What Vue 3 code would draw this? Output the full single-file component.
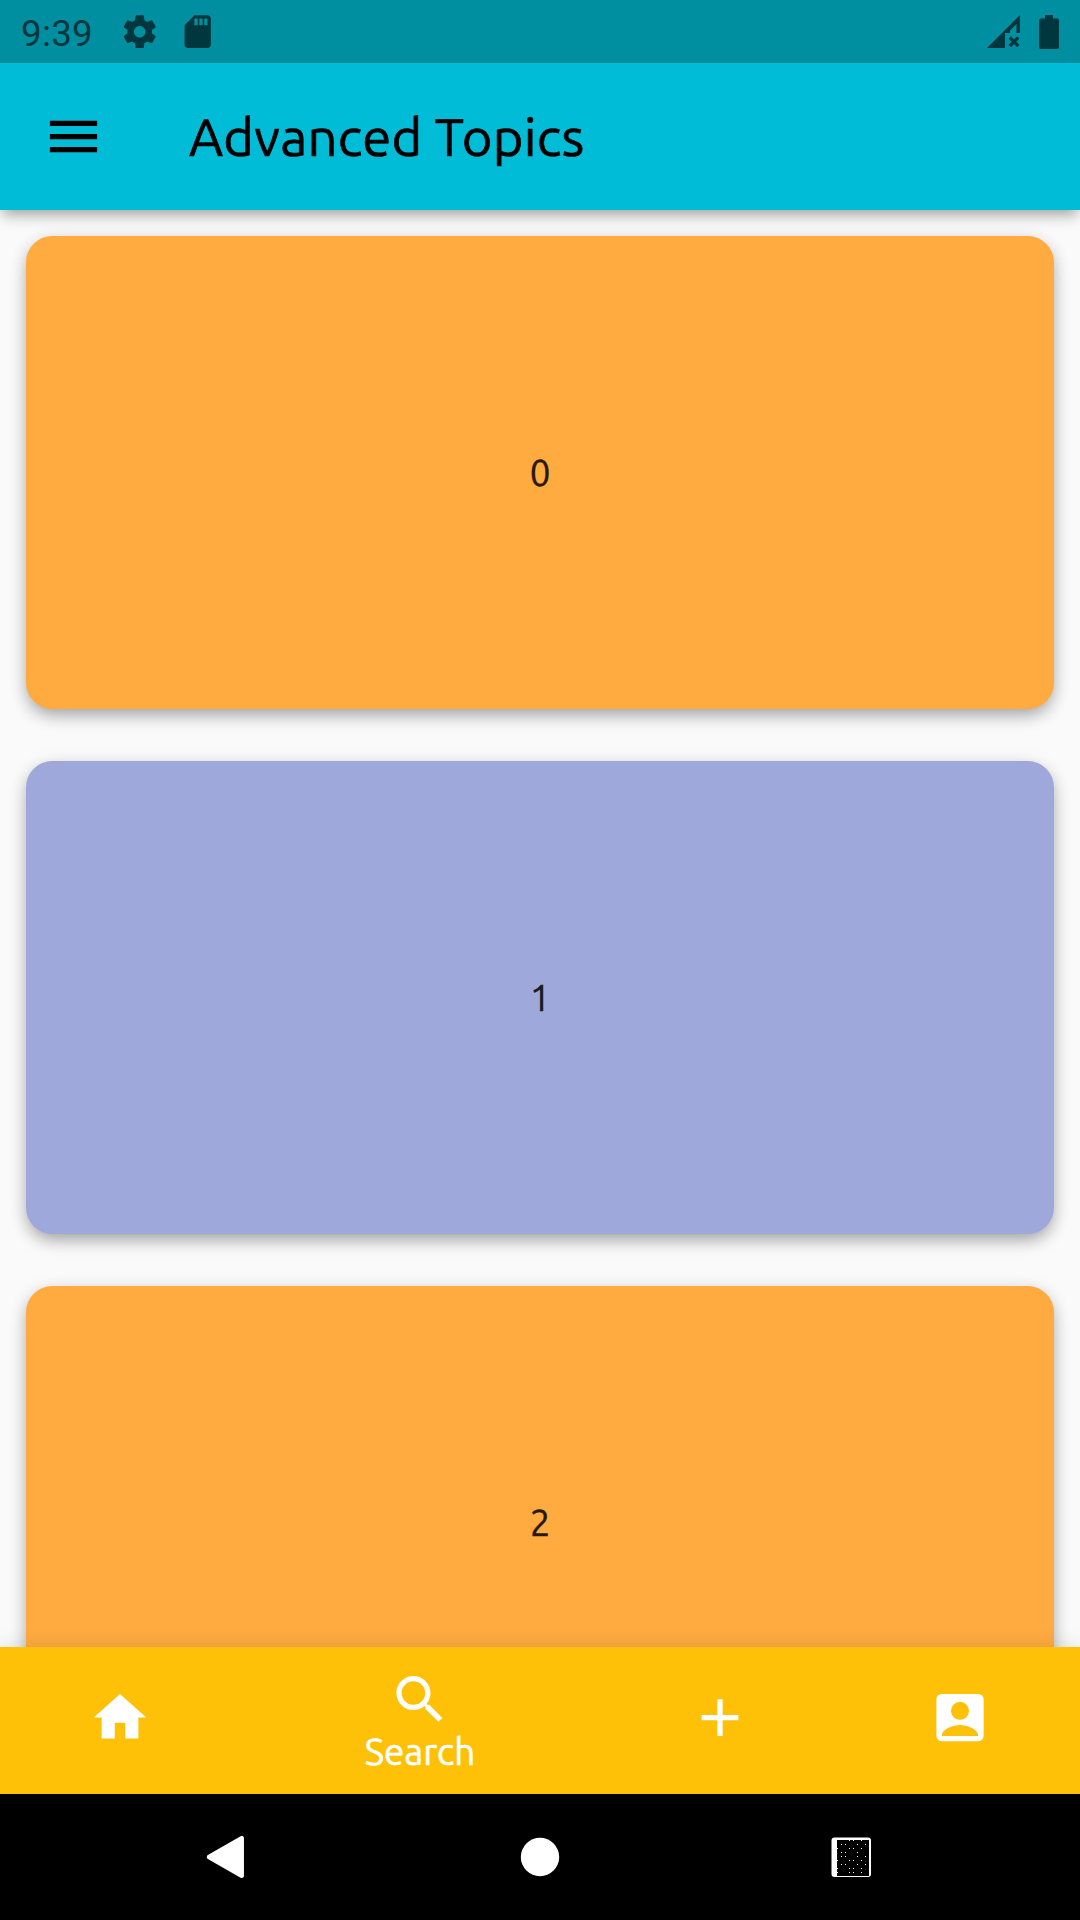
<script setup>
const cards = [
  { label: '0', tone: 'orange' },
  { label: '1', tone: 'indigo' },
  { label: '2', tone: 'orange' },
]
const dotRows = [
  [13, [29, 33, 41]],
  [17, [21, 25, 37, 45]],
  [21, [17, 29, 33, 41]],
  [25, [21, 25, 37]],
  [29, [21, 25, 37, 45]],
  [33, [17, 29, 33, 41]],
  [37, [21, 25, 37, 45]],
  [41, [17, 29, 33, 41]],
  [45, [17, 29, 33, 41]],
]
const dots = dotRows.flatMap(([y, xs]) => xs.map((x) => ({ x, y })))
</script>

<template>
  <div class="screen">
    <div class="status">
      <span class="time">9:39</span>
      <svg class="gear" viewBox="0 0 24 24"><path d="M19.43 12.98c.04-.32.07-.64.07-.98s-.03-.66-.07-.98l2.11-1.65c.19-.15.24-.42.12-.64l-2-3.46c-.12-.22-.39-.3-.61-.22l-2.49 1c-.52-.4-1.08-.73-1.69-.98l-.38-2.65C14.46 2.18 14.25 2 14 2h-4c-.25 0-.46.18-.49.42l-.38 2.65c-.61.25-1.17.59-1.69.98l-2.49-1c-.23-.09-.49 0-.61.22l-2 3.46c-.13.22-.07.49.12.64l2.11 1.65c-.04.32-.07.65-.07.98s.03.66.07.98l-2.11 1.65c-.19.15-.24.42-.12.64l2 3.46c.12.22.39.3.61.22l2.49-1c.52.4 1.08.73 1.69.98l.38 2.65c.03.24.24.42.49.42h4c.25 0 .46-.18.49-.42l.38-2.65c.61-.25 1.17-.59 1.69-.98l2.49 1c.23.09.49 0 .61-.22l2-3.46c.12-.22.07-.49-.12-.64l-2.11-1.65zM12 15.5c-1.93 0-3.5-1.57-3.5-3.5s1.57-3.5 3.5-3.5 3.5 1.57 3.5 3.5-1.57 3.5-3.5 3.5z" /></svg>
      <svg class="sd" viewBox="0 0 24 24"><path d="M18 2h-8L4.02 8 4 20c0 1.1.9 2 2 2h12c1.1 0 2-.9 2-2V4c0-1.1-.9-2-2-2zm-6 6h-2V4h2v4zm3 0h-2V4h2v4zm3 0h-2V4h2v4z" /></svg>
      <svg class="signal" viewBox="0 0 34 34">
        <path d="M0 33 33 0V18H29.5V9L23 15.5V18H18V33Z" />
        <path class="cross" d="m22.8 22.5 8.5 8.5m0-8.5-8.5 8.5" />
      </svg>
      <svg class="battery" viewBox="0 0 20 34"><path d="M6 0h8v3.5h4a2 2 0 0 1 2 2V32a2 2 0 0 1-2 2H2a2 2 0 0 1-2-2V5.5a2 2 0 0 1 2-2h4z" /></svg>
    </div>

    <header class="appbar">
      <svg class="menu" viewBox="0 0 24 24"><path d="M3 18h18v-2H3v2zm0-5h18v-2H3v2zm0-7v2h18V6H3z" /></svg>
      <h1>Advanced Topics</h1>
    </header>

    <main class="list">
      <div v-for="card in cards" :key="card.label" class="card" :class="card.tone"><span>{{ card.label }}</span></div>
    </main>

    <nav class="tabs">
      <div class="tab"><svg viewBox="0 0 24 24"><path d="M10 20v-6h4v6h5v-8h3L12 3 2 12h3v8z" /></svg></div>
      <div class="tab active">
        <svg viewBox="0 0 24 24"><path d="M15.5 14h-.79l-.28-.27C15.41 12.59 16 11.11 16 9.5 16 5.91 13.09 3 9.5 3S3 5.91 3 9.5 5.91 16 9.5 16c1.61 0 3.09-.59 4.23-1.57l.27.28v.79l5 4.99L20.49 19l-4.99-5zm-6 0C7.01 14 5 11.99 5 9.5S7.01 5 9.5 5 14 7.01 14 9.5 11.99 14 9.5 14z" /></svg>
        <span>Search</span>
      </div>
      <div class="tab"><svg viewBox="0 0 24 24"><path d="M19 13h-6v6h-2v-6H5v-2h6V5h2v6h6v2z" /></svg></div>
      <div class="tab"><svg viewBox="0 0 24 24"><path fill-rule="evenodd" d="M5 3a2 2 0 0 0-2 2v14a2 2 0 0 0 2 2h14a2 2 0 0 0 2-2V5a2 2 0 0 0-2-2zM12 6a3.45 3.45 0 1 1 0 6.9A3.45 3.45 0 1 1 12 6zM5.1 19v-.7c1-2 4-3.4 6.9-3.4s5.9 1.4 6.9 3.4v.7z" /></svg></div>
    </nav>

    <div class="system">
      <svg viewBox="0 0 60 60"><path class="back" d="M9 30 41.7 11.2v37.6z" /></svg>
      <svg viewBox="0 0 60 60"><circle cx="30" cy="30" r="19.2" /></svg>
      <svg viewBox="0 0 60 60" shape-rendering="crispEdges">
        <rect x="11.5" y="10.5" width="39.5" height="39.5" rx="3" shape-rendering="auto" />
        <rect class="hole" x="17" y="13" width="32" height="36" />
        <rect v-for="d in dots" :key="`${d.x}-${d.y}`" :x="d.x" :y="d.y" width="1" height="1" />
      </svg>
    </div>
  </div>
</template>

<style>
body { margin: 0; }
</style>

<style scoped>
.screen {
  width: 1080px;
  height: 1920px;
  display: flex;
  flex-direction: column;
  overflow: hidden;
  background: #fafafa;
  font-family: Ubuntu, "Noto Sans", sans-serif;
}
svg { display: block; flex: none; }
.status {
  height: 63px;
  flex: none;
  display: flex;
  align-items: center;
  box-sizing: border-box;
  padding: 0 21px;
  background: #008fa1;
  color: #00363d;
  fill: #00363d;
  z-index: 3;
}
.time {
  width: 99px;
  font: 36.75px/43px Roboto, sans-serif;
  letter-spacing: .3px;
  padding-top: 3px;
}
.gear { width: 39.4px; height: 39.4px; }
.sd { width: 39.4px; height: 39.4px; margin-left: 19px; }
.signal { width: 34px; height: 34px; margin-left: auto; }
.cross { stroke: #00363d; stroke-width: 3.2; fill: none; }
.battery { width: 20px; height: 34px; margin-left: 18px; }
.appbar {
  height: 147px;
  flex: none;
  display: flex;
  align-items: center;
  padding-left: 42px;
  background: #00bcd6;
  box-shadow: 0 8px 12px -3px rgba(0, 0, 0, .28), 0 3px 20px rgba(0, 0, 0, .1);
  z-index: 2;
}
.menu { width: 63px; height: 63px; }
h1 {
  margin: 0 0 0 84px;
  font-size: 52.5px;
  font-weight: 400;
  line-height: 60px;
  letter-spacing: .28px;
  -webkit-text-stroke: .7px currentColor;
  color: #000;
  white-space: nowrap;
}
.list {
  flex: 1;
  min-height: 0;
  display: flex;
  flex-direction: column;
  gap: 52.5px;
  padding: 26.25px 26.25px 0;
  overflow: hidden;
}
.card {
  flex: none;
  height: 472.5px;
  border-radius: 26.25px;
  display: flex;
  align-items: center;
  justify-content: center;
  font-size: 36.75px;
  color: rgba(0, 0, 0, .87);
  box-shadow: 0 8px 18px -3px rgba(0, 0, 0, .32), 0 3px 18px rgba(0, 0, 0, .1);
}
.card span { line-height: 42px; -webkit-text-stroke: .4px #1c1810; }
.orange { background: #ffab40; }
.indigo { background: #9fa8da; }
.tabs {
  height: 147px;
  flex: none;
  display: flex;
  background: #ffc107;
  box-shadow: 0 0 20px rgba(0, 0, 0, .12);
  fill: #fff;
  color: #fff;
  z-index: 1;
}
.tab {
  width: 240px;
  display: flex;
  flex-direction: column;
  align-items: center;
  padding-top: 39px;
  box-sizing: border-box;
}
.tab svg { width: 64px; height: 63px; }
.active { width: 360px; padding-top: 21px; }
.active span { font-size: 36.75px; line-height: 42px; -webkit-text-stroke: .6px currentColor; }
.system {
  height: 126px;
  flex: none;
  display: flex;
  align-items: center;
  justify-content: center;
  gap: 250px;
  background: #000;
  fill: #fff;
  z-index: 2;
}
.system svg { width: 60px; height: 60px; }
.back { stroke: #fff; stroke-width: 4.5; stroke-linejoin: round; }
.system .hole { fill: #000; }
</style>
